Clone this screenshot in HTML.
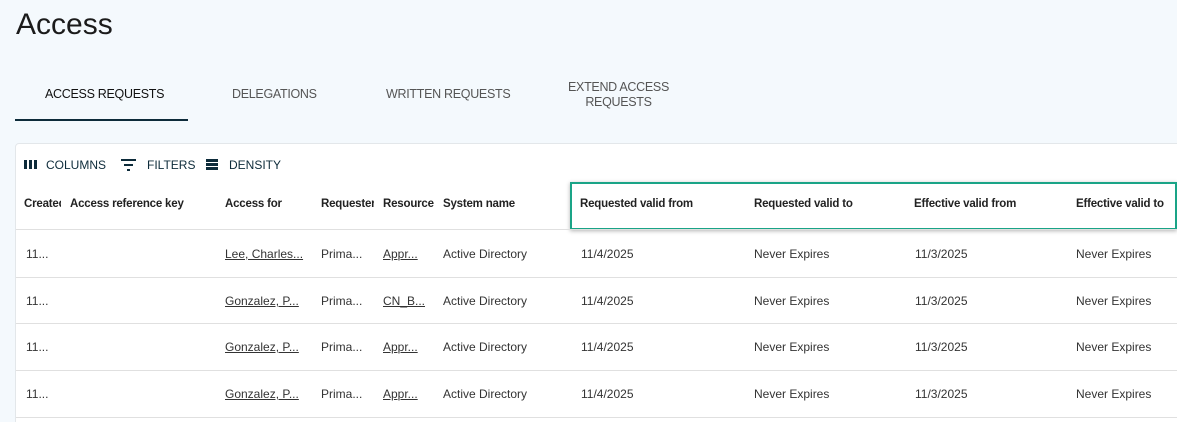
<!DOCTYPE html><html><head><style>
html,body{margin:0;width:1177px;height:422px;overflow:hidden}
body{background:#f4f9fd;font-family:"Liberation Sans",sans-serif;position:relative;color:#222}
.a{position:absolute;white-space:nowrap}
.t{font-size:12.5px;color:#555;letter-spacing:-0.3px;text-align:center}
.card{position:absolute;left:15px;top:143px;width:1170px;height:290px;background:#fff;border:1px solid #e3e7ea;border-radius:4px}
.h{font-size:11.5px;font-weight:bold;color:#222;letter-spacing:-0.2px}
.c{font-size:12px;color:#333}
.u{text-decoration:underline}
.line{position:absolute;left:16px;width:1161px;height:1px;background:#e0e0e0}
</style></head><body>
<div class="a" style="left:16px;top:8px;font-size:30px;color:#1b1b1b">Access</div>
<div class="a t" style="left:45px;top:87px;color:#111">ACCESS REQUESTS</div>
<div class="a t" style="left:232px;top:87px">DELEGATIONS</div>
<div class="a t" style="left:386px;top:87px">WRITTEN REQUESTS</div>
<div class="a t" style="left:568px;top:80px;line-height:15px">EXTEND ACCESS<br>REQUESTS</div>
<div class="a" style="left:15px;top:119px;width:173px;height:2px;background:#0d2b3a"></div>
<div class="card"></div>
<svg class="a" style="left:24px;top:159px" width="13" height="11"><rect x="0" y="1" width="3" height="9" fill="#0d2b3a"/><rect x="5" y="1" width="3" height="9" fill="#0d2b3a"/><rect x="10" y="1" width="3" height="9" fill="#0d2b3a"/></svg>
<div class="a c" style="left:46px;top:158px;color:#0d2b3a">COLUMNS</div>
<svg class="a" style="left:121px;top:158px" width="16" height="13"><rect x="0" y="1" width="15" height="2" fill="#0d2b3a"/><rect x="3" y="6" width="9" height="2" fill="#0d2b3a"/><rect x="6" y="11" width="3" height="2" fill="#0d2b3a"/></svg>
<div class="a c" style="left:147px;top:158px;color:#0d2b3a">FILTERS</div>
<svg class="a" style="left:206px;top:158px" width="13" height="13"><rect x="0" y="1" width="12" height="3" fill="#0d2b3a"/><rect x="0" y="5" width="12" height="3" fill="#0d2b3a"/><rect x="0" y="9" width="12" height="3" fill="#0d2b3a"/></svg>
<div class="a c" style="left:229px;top:158px;color:#0d2b3a">DENSITY</div>
<div class="a h" style="left:24px;top:198px;width:37px;overflow:hidden">Created</div>
<div class="a h" style="left:70px;top:198px">Access reference key</div>
<div class="a h" style="left:225px;top:198px">Access for</div>
<div class="a h" style="left:321px;top:198px;width:53px;overflow:hidden">Requester</div>
<div class="a h" style="left:383px;top:198px">Resource</div>
<div class="a h" style="left:443px;top:198px">System name</div>
<div class="a h" style="left:580px;top:198px">Requested valid from</div>
<div class="a h" style="left:754px;top:198px">Requested valid to</div>
<div class="a h" style="left:914px;top:198px">Effective valid from</div>
<div class="a h" style="left:1076px;top:198px">Effective valid to</div>
<div class="a" style="left:570px;top:182px;width:603px;height:44px;border:2px solid #1aa487;box-shadow:0 1px 4px rgba(0,0,0,.3)"></div>
<div class="line" style="top:229px"></div><div class="line" style="top:277px"></div><div class="line" style="top:323px"></div><div class="line" style="top:370px"></div><div class="line" style="top:417px"></div>
<div class="a c" style="left:26px;top:247px">11...</div><div class="a c u" style="left:225px;top:247px">Lee, Charles...</div><div class="a c" style="left:321px;top:247px">Prima...</div><div class="a c u" style="left:383px;top:247px">Appr...</div><div class="a c" style="left:443px;top:247px">Active Directory</div><div class="a c" style="left:581px;top:247px">11/4/2025</div><div class="a c" style="left:754px;top:247px">Never Expires</div><div class="a c" style="left:915px;top:247px">11/3/2025</div><div class="a c" style="left:1076px;top:247px">Never Expires</div>
<div class="a c" style="left:26px;top:294px">11...</div><div class="a c u" style="left:225px;top:294px">Gonzalez, P...</div><div class="a c" style="left:321px;top:294px">Prima...</div><div class="a c u" style="left:383px;top:294px">CN_B...</div><div class="a c" style="left:443px;top:294px">Active Directory</div><div class="a c" style="left:581px;top:294px">11/4/2025</div><div class="a c" style="left:754px;top:294px">Never Expires</div><div class="a c" style="left:915px;top:294px">11/3/2025</div><div class="a c" style="left:1076px;top:294px">Never Expires</div>
<div class="a c" style="left:26px;top:340px">11...</div><div class="a c u" style="left:225px;top:340px">Gonzalez, P...</div><div class="a c" style="left:321px;top:340px">Prima...</div><div class="a c u" style="left:383px;top:340px">Appr...</div><div class="a c" style="left:443px;top:340px">Active Directory</div><div class="a c" style="left:581px;top:340px">11/4/2025</div><div class="a c" style="left:754px;top:340px">Never Expires</div><div class="a c" style="left:915px;top:340px">11/3/2025</div><div class="a c" style="left:1076px;top:340px">Never Expires</div>
<div class="a c" style="left:26px;top:387px">11...</div><div class="a c u" style="left:225px;top:387px">Gonzalez, P...</div><div class="a c" style="left:321px;top:387px">Prima...</div><div class="a c u" style="left:383px;top:387px">Appr...</div><div class="a c" style="left:443px;top:387px">Active Directory</div><div class="a c" style="left:581px;top:387px">11/4/2025</div><div class="a c" style="left:754px;top:387px">Never Expires</div><div class="a c" style="left:915px;top:387px">11/3/2025</div><div class="a c" style="left:1076px;top:387px">Never Expires</div>
</body></html>
